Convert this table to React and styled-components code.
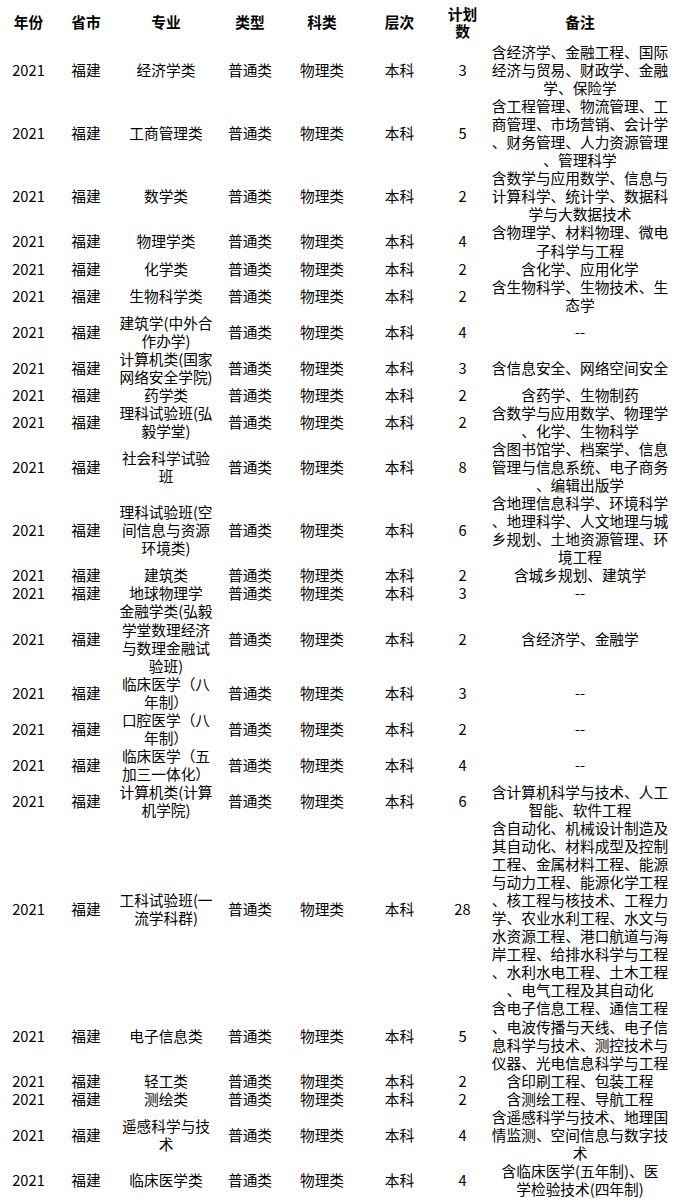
import React from 'react';
import styled, { createGlobalStyle } from 'styled-components';

const GlobalStyle = createGlobalStyle`
  html, body {
    margin: 0;
    padding: 0;
    background: #ffffff;
  }
  body {
    font-family: "Noto Sans CJK SC", "Noto Sans", sans-serif;
    color: #000;
  }
`;

const Table = styled.table`
  width: 673px;
  table-layout: fixed;
  border-collapse: collapse;
  font-size: 14.7px;
  color: #000;
`;

const HeadCell = styled.th`
  height: 43px;
  padding: 0;
  font-weight: 700;
  line-height: 17px;
  text-align: center;
  vertical-align: middle;
`;

const Cell = styled.td`
  padding: 0;
  line-height: 18.05px;
  text-align: center;
  vertical-align: middle;
  white-space: nowrap;
`;

const Line = styled.span`
  display: block;
  white-space: nowrap;
`;

const columns = [
  { label: ['年份'], width: 57 },
  { label: ['省市'], width: 58 },
  { label: ['专业'], width: 102 },
  { label: ['类型'], width: 66 },
  { label: ['科类'], width: 78 },
  { label: ['层次'], width: 77 },
  { label: ['计划', '数'], width: 49 },
  { label: ['备注'], width: 186 },
];

// 专业 and 备注 keep the original line breaks (punctuation may start a line)
const rows = [
  [['经济学类'], 3, ['含经济学、金融工程、国际', '经济与贸易、财政学、金融', '学、保险学']],
  [['工商管理类'], 5, ['含工程管理、物流管理、工', '商管理、市场营销、会计学', '、财务管理、人力资源管理', '、管理科学']],
  [['数学类'], 2, ['含数学与应用数学、信息与', '计算科学、统计学、数据科', '学与大数据技术']],
  [['物理学类'], 4, ['含物理学、材料物理、微电', '子科学与工程']],
  [['化学类'], 2, ['含化学、应用化学']],
  [['生物科学类'], 2, ['含生物科学、生物技术、生', '态学']],
  [['建筑学(中外合', '作办学)'], 4, ['--']],
  [['计算机类(国家', '网络安全学院)'], 3, ['含信息安全、网络空间安全']],
  [['药学类'], 2, ['含药学、生物制药']],
  [['理科试验班(弘', '毅学堂)'], 2, ['含数学与应用数学、物理学', '、化学、生物科学']],
  [['社会科学试验', '班'], 8, ['含图书馆学、档案学、信息', '管理与信息系统、电子商务', '、编辑出版学']],
  [['理科试验班(空', '间信息与资源', '环境类)'], 6, ['含地理信息科学、环境科学', '、地理科学、人文地理与城', '乡规划、土地资源管理、环', '境工程']],
  [['建筑类'], 2, ['含城乡规划、建筑学']],
  [['地球物理学'], 3, ['--']],
  [['金融学类(弘毅', '学堂数理经济', '与数理金融试', '验班)'], 2, ['含经济学、金融学']],
  [['临床医学（八', '年制）'], 3, ['--']],
  [['口腔医学（八', '年制）'], 2, ['--']],
  [['临床医学（五', '加三一体化）'], 4, ['--']],
  [['计算机类(计算', '机学院)'], 6, ['含计算机科学与技术、人工', '智能、软件工程']],
  [['工科试验班(一', '流学科群)'], 28, [
    '含自动化、机械设计制造及',
    '其自动化、材料成型及控制',
    '工程、金属材料工程、能源',
    '与动力工程、能源化学工程',
    '、核工程与核技术、工程力',
    '学、农业水利工程、水文与',
    '水资源工程、港口航道与海',
    '岸工程、给排水科学与工程',
    '、水利水电工程、土木工程',
    '、电气工程及其自动化',
  ]],
  [['电子信息类'], 5, ['含电子信息工程、通信工程', '、电波传播与天线、电子信', '息科学与技术、测控技术与', '仪器、光电信息科学与工程']],
  [['轻工类'], 2, ['含印刷工程、包装工程']],
  [['测绘类'], 2, ['含测绘工程、导航工程']],
  [['遥感科学与技', '术'], 4, ['含遥感科学与技术、地理国', '情监测、空间信息与数字技', '术']],
  [['临床医学类'], 4, ['含临床医学(五年制)、医', '学检验技术(四年制)']],
];

const Lines = ({ items }) => items.map((text, i) => <Line key={i}>{text}</Line>);

const App = () => (
  <>
    <GlobalStyle />
    <Table>
      <colgroup>
        {columns.map((col, i) => (
          <col key={i} style={{ width: col.width }} />
        ))}
      </colgroup>
      <thead>
        <tr>
          {columns.map((col, i) => (
            <HeadCell key={i}>
              <Lines items={col.label} />
            </HeadCell>
          ))}
        </tr>
      </thead>
      <tbody>
        {rows.map(([major, plan, note], i) => (
          <tr key={i}>
            <Cell>2021</Cell>
            <Cell>福建</Cell>
            <Cell>
              <Lines items={major} />
            </Cell>
            <Cell>普通类</Cell>
            <Cell>物理类</Cell>
            <Cell>本科</Cell>
            <Cell>{plan}</Cell>
            <Cell>
              <Lines items={note} />
            </Cell>
          </tr>
        ))}
      </tbody>
    </Table>
  </>
);

export default App;
